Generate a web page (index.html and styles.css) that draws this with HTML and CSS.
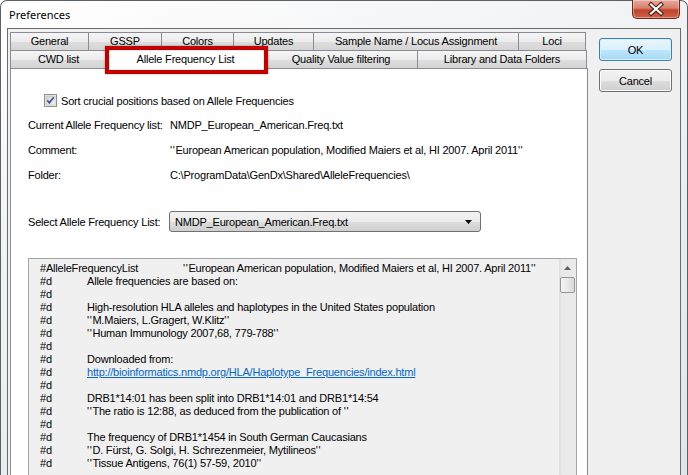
FILE: index.html
```html
<!DOCTYPE html>
<html lang="en">
<head>
    <meta charset="UTF-8">
    <title>Preferences</title>
    <link rel="stylesheet" href="styles.css">
</head>
<body>
    <div class="window">
        <!-- Title bar -->
        <div class="titlebar">
            <span class="title">Preferences</span>
            <div class="close">
                <svg width="46" height="18" viewBox="0 0 46 18">
                    <path d="M18 4.5 L28 13.5 M28 4.5 L18 13.5" stroke="#4a1a12" stroke-width="4.2" stroke-linecap="square"/>
                    <path d="M18 4.5 L28 13.5 M28 4.5 L18 13.5" stroke="#ffffff" stroke-width="2.2" stroke-linecap="square"/>
                </svg>
            </div>
        </div>

        <div class="client">
            <div class="tabs-col">
                <div class="tab-row">
                    <div class="tab t-general">General</div>
                    <div class="tab t-gssp">GSSP</div>
                    <div class="tab t-colors">Colors</div>
                    <div class="tab t-updates">Updates</div>
                    <div class="tab t-sample">Sample Name / Locus Assignment</div>
                    <div class="tab t-loci">Loci</div>
                </div>
                <div class="tab-row">
                    <div class="tab t-cwd">CWD list</div>
                    <div class="tab t-allele selected">
                        Allele Frequency List
                        <div class="highlight"></div>
                    </div>
                    <div class="tab t-quality">Quality Value filtering</div>
                    <div class="tab t-library">Library and Data Folders</div>
                </div>

                <!-- Allele Frequency page -->
                <div class="panel">
                    <div class="check">
                        <svg width="13" height="13" viewBox="0 0 13 13">
                            <defs>
                                <linearGradient id="cb" x1="0" y1="0" x2="1" y2="1">
                                    <stop offset="0" stop-color="#cfcfcf"/>
                                    <stop offset="1" stop-color="#fbfbfb"/>
                                </linearGradient>
                            </defs>
                            <rect x="0.5" y="0.5" width="12" height="12" fill="#f4f4f4" stroke="#8e8f8f"/>
                            <rect x="2" y="2" width="9" height="9" fill="url(#cb)" stroke="#b4b4b4" stroke-width="0.6"/>
                            <path d="M3.3 6.4 L5.4 8.8 L9.8 3.2" fill="none" stroke="#3f5c9a" stroke-width="1.8"/>
                        </svg>
                        <span>Sort crucial positions based on Allele Frequencies</span>
                    </div>

                    <div class="info">
                        <span>Current Allele Frequency list:</span>
                        <span>NMDP_European_American.Freq.txt</span>
                        <span>Comment:</span>
                        <span><span class="q">''</span>European American population, Modified Maiers et al, HI 2007. April 2011<span class="q">''</span></span>
                        <span>Folder:</span>
                        <span>C:\ProgramData\GenDx\Shared\AlleleFrequencies\</span>
                    </div>

                    <div class="select-row">
                        <span class="select-label">Select Allele Frequency List:</span>
                        <div class="combo">
                            <span>NMDP_European_American.Freq.txt</span>
                            <svg width="7" height="4" viewBox="0 0 7 4"><path d="M0 0 H7 L3.5 4 Z" fill="#000"/></svg>
                        </div>
                    </div>

                    <div class="textbox">
                        <div class="lines">
                            <div><span class="key wide">#AlleleFrequencyList</span><span class="q">''</span>European American population, Modified Maiers et al, HI 2007. April 2011<span class="q">''</span></div>
                            <div><span class="key">#d</span>Allele frequencies are based on:</div>
                            <div><span class="key">#d</span></div>
                            <div><span class="key">#d</span>High-resolution HLA alleles and haplotypes in the United States population</div>
                            <div><span class="key">#d</span><span class="q">''</span>M.Maiers, L.Gragert, W.Klitz<span class="q">''</span></div>
                            <div><span class="key">#d</span><span class="q">''</span>Human Immunology 2007,68, 779-788<span class="q">''</span></div>
                            <div><span class="key">#d</span></div>
                            <div><span class="key">#d</span>Downloaded from:</div>
                            <div><span class="key">#d</span><a href="#">http://bioinformatics.nmdp.org/HLA/Haplotype_Frequencies/index.html</a></div>
                            <div><span class="key">#d</span></div>
                            <div><span class="key">#d</span>DRB1*14:01 has been split into DRB1*14:01 and DRB1*14:54</div>
                            <div><span class="key">#d</span><span class="q">''</span>The ratio is 12:88, as deduced from the publication of <span class="q">''</span></div>
                            <div><span class="key">#d</span></div>
                            <div><span class="key">#d</span>The frequency of DRB1*1454 in South German Caucasians</div>
                            <div><span class="key">#d</span><span class="q">''</span>D. Fürst, G. Solgi, H. Schrezenmeier, Mytilineos<span class="q">''</span></div>
                            <div><span class="key">#d</span><span class="q">''</span>Tissue Antigens, 76(1) 57-59, 2010<span class="q">''</span></div>
                        </div>
                        <div class="scroll">
                            <div class="arrow">
                                <svg width="7" height="4" viewBox="0 0 7 4"><path d="M0 4 H7 L3.5 0 Z" fill="#606060"/></svg>
                            </div>
                            <div class="thumb"></div>
                        </div>
                    </div>
                </div>
            </div>

            <div class="buttons">
                <button class="btn default">OK</button>
                <button class="btn">Cancel</button>
            </div>
        </div>
    </div>
</body>
</html>
```

FILE: styles.css
```css
/* General Styling */
html, body {
    margin: 0;
    width: 688px;
    height: 475px;
    overflow: hidden;
    background: #ffffff;
    font-family: "Liberation Sans", Arial, sans-serif;
    font-size: 11px;
    letter-spacing: -0.2px;
    color: #000;
}
.window {
    box-sizing: border-box;
    height: 490px;
    padding: 0 6px;
    border: 1px solid #5d6166;
    border-bottom: none;
    border-radius: 7px 7px 0 0;
    background: linear-gradient(160deg, #ffffff 0%, #f1f2f4 35%, #e2e4e7 100%);
}

/* Title bar */
.titlebar {
    height: 27px;
    display: flex;
    align-items: flex-start;
}
.title {
    margin-left: 2px;
    line-height: 28px;
    font-family: "Noto Sans", "Open Sans", sans-serif;
    font-size: 11px;
    letter-spacing: 0;
}
.close {
    margin-left: auto;
    margin-right: 1px;
    margin-top: -1px;
    width: 46px;
    height: 18px;
    border: 1px solid #6a2a1f;
    border-top: none;
    border-radius: 0 0 5px 5px;
    background: linear-gradient(#e9a99b 0%, #d8806c 45%, #c2432a 55%, #d0644a 100%);
    box-shadow: inset 0 0 0 1px rgba(255, 255, 255, 0.35);
}
.close svg {
    display: block;
}

/* Client area */
.client {
    box-sizing: border-box;
    height: 470px;
    display: flex;
    padding: 3px 0 0 2px;
    border: 1px solid #6b6b6b;
    background-color: #f0f0f0;
}
.tabs-col {
    width: 578px;
}
.tab-row {
    display: flex;
    align-items: flex-start;
    height: 18px;
}
.tab {
    box-sizing: border-box;
    height: 18px;
    margin-right: -1px;
    border: 1px solid #898c95;
    border-bottom: none;
    text-align: center;
    line-height: 17px;
    background: linear-gradient(#f5f5f5 0%, #ebebeb 50%, #dedede 51%, #d4d4d4 100%);
    white-space: nowrap;
}
.t-general { width: 79px; }
.t-gssp { width: 74px; }
.t-colors { width: 73px; }
.t-updates { width: 81px; }
.t-sample { width: 206px; }
.t-loci { width: 68px; }
.t-cwd { width: 97px; }
.t-allele { width: 159px; }
.t-quality { width: 154px; }
.t-library { width: 170px; }

.tab.selected {
    position: relative;
    z-index: 2;
    height: 21px;
    margin-top: -2px;
    line-height: 21px;
    background: #ffffff;
}
.highlight {
    position: absolute;
    left: -2px;
    top: -3px;
    width: 163px;
    height: 28px;
    box-sizing: border-box;
    border: 4px solid #c20000;
    box-shadow: 0 0 2px rgba(0, 0, 0, 0.35), inset 0 0 2px rgba(0, 0, 0, 0.3);
}

/* Tab page */
.panel {
    box-sizing: border-box;
    height: 430px;
    padding: 0 0 0 17px;
    border: 1px solid #898c95;
    background-color: #ffffff;
}
.check {
    margin-top: 25px;
    height: 13px;
    padding-left: 16px;
    display: flex;
    align-items: center;
}
.check svg {
    display: block;
    margin-right: 4px;
}
.info {
    margin-top: 6px;
    display: grid;
    grid-template-columns: 142px 1fr;
    grid-auto-rows: 25px;
    line-height: 25px;
    white-space: nowrap;
}
.q {
    letter-spacing: 0.6px;
}
.select-row {
    margin-top: 23px;
    height: 21px;
    display: flex;
    align-items: center;
}
.select-label {
    width: 141px;
}
.combo {
    box-sizing: border-box;
    width: 312px;
    height: 21px;
    padding: 0 8px 0 5px;
    display: flex;
    align-items: center;
    justify-content: space-between;
    border: 1px solid #707070;
    border-radius: 3px;
    background: linear-gradient(#f2f2f2 0%, #ebebeb 50%, #dddddd 51%, #cfcfcf 100%);
}
.combo svg {
    display: block;
}

/* Read only text box */
.textbox {
    box-sizing: border-box;
    margin-top: 26px;
    width: 549px;
    height: 230px;
    display: flex;
    border: 1px solid #a3a6ad;
    background-color: #f0f0f0;
}
.lines {
    flex: 1;
    padding: 3px 0 0 11px;
    line-height: 13px;
    white-space: nowrap;
    overflow: hidden;
}
.key {
    display: inline-block;
    width: 47px;
}
.key.wide {
    width: 143px;
}
.lines a {
    color: #0066cc;
}
.scroll {
    width: 17px;
    background: linear-gradient(to right, #dcdcdc 0, #e9e9e9 3px, #eaeaea 100%);
}
.arrow {
    height: 17px;
    display: flex;
    align-items: center;
    justify-content: center;
}
.arrow svg {
    display: block;
}
.thumb {
    box-sizing: border-box;
    width: 15px;
    height: 16px;
    margin: 1px 0 0 1px;
    border: 1px solid #979797;
    border-radius: 2px;
    background: linear-gradient(to right, #f4f4f4 0%, #e8e8e8 50%, #d8d8d8 100%);
}

/* Dialog buttons */
.buttons {
    margin: 6px 0 0 11px;
    display: flex;
    flex-direction: column;
    gap: 8px;
}
.btn {
    box-sizing: border-box;
    width: 73px;
    height: 23px;
    padding: 0;
    font-family: inherit;
    font-size: 11px;
    letter-spacing: -0.2px;
    color: #000;
    border: 1px solid #707070;
    border-radius: 3px;
    background: linear-gradient(#f2f2f2 0%, #ebebeb 50%, #dddddd 51%, #cfcfcf 100%);
    box-shadow: inset 0 0 0 1px #fcfcfc;
}
.btn.default {
    border-color: #3c7fb1;
    background: linear-gradient(#eaf6fd 0%, #d9f0fc 50%, #bee6fd 51%, #a7d9f5 100%);
    box-shadow: inset 0 0 0 1px #d8eefb;
}
```
